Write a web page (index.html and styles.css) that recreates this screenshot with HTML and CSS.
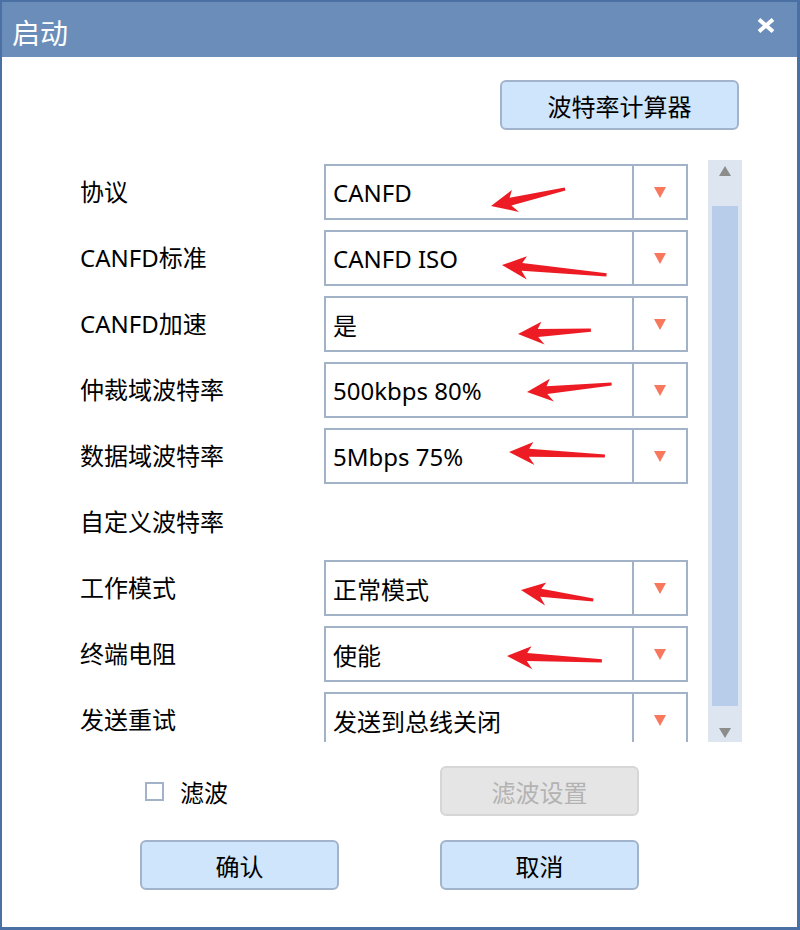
FILE: index.html
```html
<!DOCTYPE html>
<html lang="zh-CN">
<head>
    <meta charset="UTF-8">
    <meta name="viewport" content="width=device-width, initial-scale=1.0">
    <title>启动</title>
    <link rel="stylesheet" href="styles.css">
</head>
<body>
    <div class="window">
        <div class="titlebar">
            <span class="title">启动</span>
            <svg class="close" width="18" height="15" viewBox="0 0 18 15">
                <path d="M2 1.5 L16 13.5 M16 1.5 L2 13.5" stroke="#fff" stroke-width="4" stroke-linecap="butt"/>
            </svg>
        </div>

        <div class="toolbar">
            <button class="btn">波特率计算器</button>
        </div>

        <div class="form">
            <div class="form-scroll">
                <div class="row">
                    <div class="label">协议</div>
                    <div class="select"><div class="value">CANFD</div><div class="drop"><span class="tri"></span></div></div>
                </div>
                <div class="row">
                    <div class="label">CANFD标准</div>
                    <div class="select"><div class="value">CANFD ISO</div><div class="drop"><span class="tri"></span></div></div>
                </div>
                <div class="row">
                    <div class="label">CANFD加速</div>
                    <div class="select"><div class="value">是</div><div class="drop"><span class="tri"></span></div></div>
                </div>
                <div class="row">
                    <div class="label">仲裁域波特率</div>
                    <div class="select"><div class="value">500kbps 80%</div><div class="drop"><span class="tri"></span></div></div>
                </div>
                <div class="row">
                    <div class="label">数据域波特率</div>
                    <div class="select"><div class="value">5Mbps 75%</div><div class="drop"><span class="tri"></span></div></div>
                </div>
                <div class="row">
                    <div class="label">自定义波特率</div>
                </div>
                <div class="row">
                    <div class="label">工作模式</div>
                    <div class="select"><div class="value">正常模式</div><div class="drop"><span class="tri"></span></div></div>
                </div>
                <div class="row">
                    <div class="label">终端电阻</div>
                    <div class="select"><div class="value">使能</div><div class="drop"><span class="tri"></span></div></div>
                </div>
                <div class="row">
                    <div class="label">发送重试</div>
                    <div class="select"><div class="value">发送到总线关闭</div><div class="drop"><span class="tri"></span></div></div>
                </div>
            </div>
            <div class="scrollbar">
                <div class="scroll-up"><span class="tri-up"></span></div>
                <div class="thumb"></div>
                <div class="scroll-down"><span class="tri-down"></span></div>
            </div>
        </div>

        <div class="footer">
            <label class="check">
                <span class="box"></span>
                <span>滤波</span>
            </label>
            <button class="btn" disabled>滤波设置</button>
            <button class="btn">确认</button>
            <button class="btn">取消</button>
        </div>

        <!-- red annotation arrows over the form -->
        <svg class="marks" width="800" height="930" viewBox="0 0 800 930">
            <g fill="#ed1c24">
                <polygon transform="translate(491 206) rotate(-12.9)" points="0,0 24,-11 20,-4 76,-1.6 76,1.6 20,4 26,12"/>
                <polygon transform="translate(502 265) rotate(5.4)" points="0,0 24,-11 20,-4 105,-1.6 105,1.6 20,4 26,12"/>
                <polygon transform="translate(518 334) rotate(-3.1)" points="0,0 24,-11 20,-4 73,-1.6 73,1.6 20,4 26,12"/>
                <polygon transform="translate(527 392) rotate(-5.4)" points="0,0 24,-11 20,-4 85,-1.6 85,1.6 20,4 26,12"/>
                <polygon transform="translate(509 452) rotate(2.4)" points="0,0 24,-11 20,-4 96,-1.6 96,1.6 20,4 26,12"/>
                <polygon transform="translate(521 590) rotate(7.9)" points="0,0 24,-11 20,-4 73,-1.6 73,1.6 20,4 26,12"/>
                <polygon transform="translate(507 656) rotate(3)" points="0,0 24,-11 20,-4 95,-1.6 95,1.6 20,4 26,12"/>
            </g>
        </svg>
    </div>
</body>
</html>
```

FILE: styles.css
```css
body {
    margin: 0;
    font-family: "Noto Sans", "Noto Sans CJK SC", sans-serif;
    font-size: 24px;
    color: #000;
    background-color: #fff;
}
.window {
    position: relative;
    width: 800px;
    height: 930px;
    box-sizing: border-box;
    border-style: solid;
    border-color: #4b70a4;
    border-width: 2px 3px 3px 2px;
    background-color: #fff;
    overflow: hidden;
}
.titlebar {
    height: 55px;
    background-color: #6a8eb9;
    display: flex;
    align-items: center;
    justify-content: space-between;
    padding: 0 22px 0 10px;
}
.title {
    color: #fff;
    font-size: 28px;
    line-height: 1;
    padding-top: 6px;
}
.close {
    display: block;
    margin-top: -8px;
}
.toolbar {
    display: flex;
    justify-content: flex-end;
    padding: 23px 58px 0 0;
}
.btn {
    width: 199px;
    height: 50px;
    box-sizing: border-box;
    border: 2px solid #a1b4cb;
    border-radius: 6px;
    background-color: #cfe5fb;
    font-family: inherit;
    font-size: 24px;
    color: #000;
    padding: 0;
}
.toolbar .btn {
    width: 239px;
}
.btn:disabled {
    background-color: #e5e5e5;
    border-color: #d6d6d6;
    color: #b3b3b3;
}
.form {
    display: flex;
    gap: 20px;
    margin-top: 30px;
    padding-left: 78px;
}
.form-scroll {
    width: 608px;
    height: 582px;
    box-sizing: border-box;
    padding-top: 4px;
    overflow: hidden;
}
.row {
    display: flex;
    align-items: center;
    height: 56px;
    margin-bottom: 10px;
}
.label {
    width: 244px;
    line-height: 1.2;
}
.select {
    display: flex;
    width: 364px;
    height: 56px;
    box-sizing: border-box;
    border: 2px solid #a3b3c7;
}
.value {
    flex: 1;
    display: flex;
    align-items: center;
    padding-left: 7px;
}
.drop {
    width: 52px;
    border-left: 2px solid #a3b3c7;
    display: flex;
    align-items: center;
    justify-content: center;
}
.tri {
    width: 0;
    height: 0;
    border-left: 6.5px solid transparent;
    border-right: 6.5px solid transparent;
    border-top: 11px solid #f8785e;
}
.scrollbar {
    width: 34px;
    height: 582px;
    background-color: #dce5f0;
    display: flex;
    flex-direction: column;
}
.scroll-up {
    height: 46px;
    display: flex;
    justify-content: center;
    padding-top: 6px;
    box-sizing: border-box;
}
.thumb {
    height: 500px;
    margin: 0 4px;
    background-color: #b8cdea;
}
.scroll-down {
    flex: 1;
    display: flex;
    justify-content: center;
    padding-top: 22px;
    box-sizing: border-box;
}
.tri-up, .tri-down {
    width: 0;
    height: 0;
    border-left: 6px solid transparent;
    border-right: 6px solid transparent;
}
.tri-up {
    border-bottom: 10px solid #8c8c8c;
}
.tri-down {
    border-top: 10px solid #8c8c8c;
}
.footer {
    display: grid;
    grid-template-columns: 199px 199px;
    grid-auto-rows: 50px;
    column-gap: 101px;
    row-gap: 24px;
    margin-top: 24px;
    padding-left: 138px;
}
.check {
    display: flex;
    align-items: center;
    padding-left: 5px;
}
.box {
    width: 19px;
    height: 19px;
    box-sizing: border-box;
    border: 2px solid #a3b3c7;
    margin-right: 16px;
}
.marks {
    position: absolute;
    left: -2px;
    top: -2px;
    pointer-events: none;
}
```
